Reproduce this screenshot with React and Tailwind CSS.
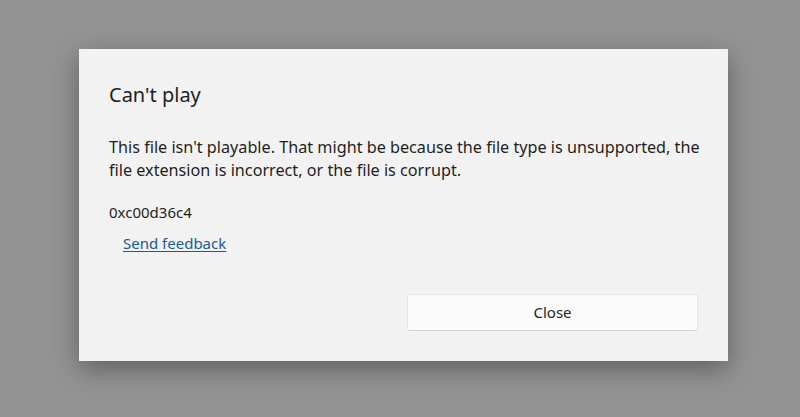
import React from 'react';

const App = () => {
  return (
    <div
      className="w-[800px] h-[417px] bg-[#939393] pt-[49px] pl-[79px] overflow-hidden"
      style={{ fontFamily: '"Noto Sans", "Open Sans", sans-serif' }}
    >
      <div className="w-[649px] h-[312px] bg-[#f2f2f2] flex flex-col px-[30px] pb-[30px] shadow-[0_8px_24px_rgba(0,0,0,0.35)] text-[#1f1f1f]">
        <h1 className="mt-[32px] text-[20px] leading-[28px]">Can't play</h1>

        <p className="mt-[27px] text-[16.2px] leading-[23px] whitespace-nowrap">
          This file isn't playable. That might be because the file type is unsupported, the
          <br />
          file extension is incorrect, or the file is corrupt.
        </p>

        <p className="mt-[19px] text-[15px] leading-[23px]">0xc00d36c4</p>

        <a href="#" className="mt-[8px] ml-[14px] self-start text-[15px] leading-[23px] text-[#1a5a96] underline underline-offset-2">
          Send feedback
        </a>

        <div className="mt-auto flex justify-end">
          <button className="w-[291px] h-[37px] bg-[#fbfbfb] border border-[#e6e6e6] border-b-[#d4d4d4] rounded-[3px] text-[15px] text-[#1f1f1f]">
            Close
          </button>
        </div>
      </div>
    </div>
  );
};

export default App;
